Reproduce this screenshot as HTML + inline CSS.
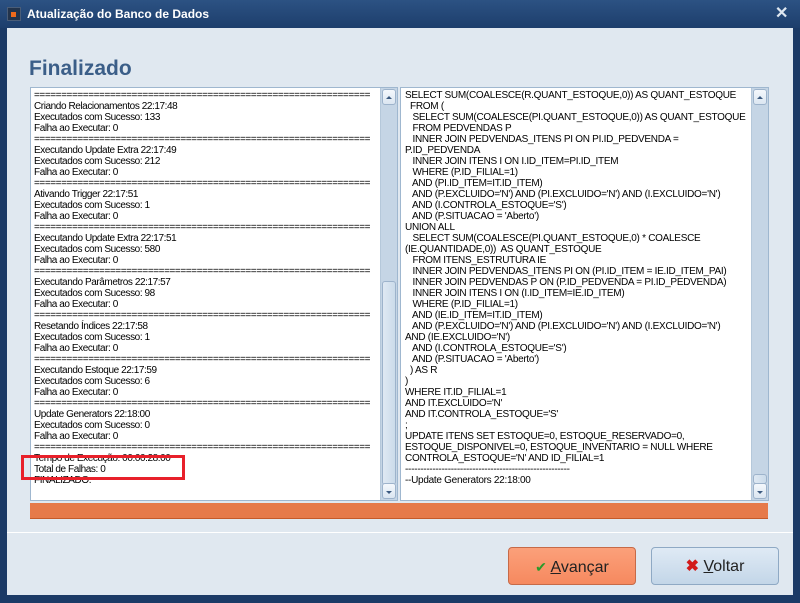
<!DOCTYPE html>
<html><head><meta charset="utf-8"><style>
*{margin:0;padding:0;box-sizing:border-box}
body{width:800px;height:603px;overflow:hidden;background:#1b3a66;font-family:"Liberation Sans",sans-serif;position:relative}
.tb{position:absolute;left:0;top:0;width:800px;height:28px;background:linear-gradient(#2c5283,#1d3e6c)}
.tb .t{position:absolute;left:27px;top:7px;color:#fff;font-weight:bold;font-size:12px}
.ico{position:absolute;left:7px;top:7px;width:14px;height:14px;background:#23344c;border:1px solid #4a5d78}
.ico:after{content:"";position:absolute;left:3px;top:4px;width:5px;height:5px;background:#f06a1c}
.x{position:absolute;left:775px;top:3px;color:#dfe7f0;font-size:16px;font-weight:bold}
.client{position:absolute;left:7px;top:28px;width:786px;height:567px;background:#e0e8f0}
.fin{position:absolute;left:29px;top:57px;font-size:21px;font-weight:bold;color:#3b5e88}
.panel{position:absolute;top:87px;height:414px;background:#fff;border:1px solid #9fb7cf;overflow:hidden}
.txt{position:absolute;left:3px;top:2px;font-size:10px;line-height:11px;white-space:pre;color:#000}
.sb{position:absolute;top:0;right:0;width:17px;height:100%;background:#c5d5e5;border-left:1px solid #b5c8da}
.btnA,.btnB{position:absolute;left:1px;width:14px;height:16px;border:1px solid #9db3cb;border-radius:3px;background:linear-gradient(#f4f8fc,#dbe6f1)}
.btnA{top:1px}.btnB{bottom:1px}
.btnA:after,.btnB:after{content:"";position:absolute;left:3px;border-left:3px solid transparent;border-right:3px solid transparent}
.btnA:after{top:6px;border-bottom:3px solid #3c5a80}
.btnB:after{top:7px;border-top:3px solid #3c5a80}
.thumb{position:absolute;left:1px;width:14px;border:1px solid #9db3cb;border-radius:3px;background:linear-gradient(90deg,#dfe9f3,#cbdbea)}
.bar{position:absolute;left:30px;top:503px;width:738px;height:16px;background:#e67a4a;border-bottom:1px solid #c45a2a}
.sep{position:absolute;left:7px;top:532px;width:786px;height:1px;background:#fff}
.b{position:absolute;top:547px;width:128px;height:38px;border-radius:4px;font-size:16px;text-align:center;line-height:38px;color:#222}
.b1{left:508px;background:linear-gradient(#fba07a,#f6895f);border:1px solid #c66a48}
.b2{left:651px;background:linear-gradient(#dfeaf5,#c3d6e8);border:1px solid #8fa9c4}
.red{position:absolute;left:21px;top:455px;width:164px;height:25px;border:3px solid #e8202a}
</style></head><body>
<div class="tb"><div class="ico"></div><div class="t">Atualização do Banco de Dados</div><div class="x">✕</div></div>
<div class="client"></div>
<div class="fin">Finalizado</div>
<div class="panel" style="left:30px;width:368px">
<div class="txt" style="letter-spacing:-0.42px">==============================================================
Criando Relacionamentos 22:17:48
Executados com Sucesso: 133
Falha ao Executar: 0
==============================================================
Executando Update Extra 22:17:49
Executados com Sucesso: 212
Falha ao Executar: 0
==============================================================
Ativando Trigger 22:17:51
Executados com Sucesso: 1
Falha ao Executar: 0
==============================================================
Executando Update Extra 22:17:51
Executados com Sucesso: 580
Falha ao Executar: 0
==============================================================
Executando Parâmetros 22:17:57
Executados com Sucesso: 98
Falha ao Executar: 0
==============================================================
Resetando Índices 22:17:58
Executados com Sucesso: 1
Falha ao Executar: 0
==============================================================
Executando Estoque 22:17:59
Executados com Sucesso: 6
Falha ao Executar: 0
==============================================================
Update Generators 22:18:00
Executados com Sucesso: 0
Falha ao Executar: 0
==============================================================
Tempo de Execução: 00:00:28:00
Total de Falhas: 0
FINALIZADO.</div>
<div class="sb"><div class="btnA"></div><div class="thumb" style="top:193px;height:204px"></div><div class="btnB"></div></div>
</div>
<div class="panel" style="left:400px;width:369px">
<div class="txt" style="letter-spacing:-0.28px;left:4px">SELECT SUM(COALESCE(R.QUANT_ESTOQUE,0)) AS QUANT_ESTOQUE
  FROM (
   SELECT SUM(COALESCE(PI.QUANT_ESTOQUE,0)) AS QUANT_ESTOQUE
   FROM PEDVENDAS P
   INNER JOIN PEDVENDAS_ITENS PI ON PI.ID_PEDVENDA =
P.ID_PEDVENDA
   INNER JOIN ITENS I ON I.ID_ITEM=PI.ID_ITEM
   WHERE (P.ID_FILIAL=1)
   AND (PI.ID_ITEM=IT.ID_ITEM)
   AND (P.EXCLUIDO='N') AND (PI.EXCLUIDO='N') AND (I.EXCLUIDO='N')
   AND (I.CONTROLA_ESTOQUE='S')
   AND (P.SITUACAO = 'Aberto')
UNION ALL
   SELECT SUM(COALESCE(PI.QUANT_ESTOQUE,0) * COALESCE
(IE.QUANTIDADE,0))  AS QUANT_ESTOQUE
   FROM ITENS_ESTRUTURA IE
   INNER JOIN PEDVENDAS_ITENS PI ON (PI.ID_ITEM = IE.ID_ITEM_PAI)
   INNER JOIN PEDVENDAS P ON (P.ID_PEDVENDA = PI.ID_PEDVENDA)
   INNER JOIN ITENS I ON (I.ID_ITEM=IE.ID_ITEM)
   WHERE (P.ID_FILIAL=1)
   AND (IE.ID_ITEM=IT.ID_ITEM)
   AND (P.EXCLUIDO='N') AND (PI.EXCLUIDO='N') AND (I.EXCLUIDO='N')
AND (IE.EXCLUIDO='N')
   AND (I.CONTROLA_ESTOQUE='S')
   AND (P.SITUACAO = 'Aberto')
  ) AS R
)
WHERE IT.ID_FILIAL=1
AND IT.EXCLUIDO='N'
AND IT.CONTROLA_ESTOQUE='S'
;
UPDATE ITENS SET ESTOQUE=0, ESTOQUE_RESERVADO=0,
ESTOQUE_DISPONIVEL=0, ESTOQUE_INVENTARIO = NULL WHERE
CONTROLA_ESTOQUE='N' AND ID_FILIAL=1
------------------------------------------------------
--Update Generators 22:18:00</div>
<div class="sb"><div class="btnA"></div><div class="thumb" style="top:386px;height:10px"></div><div class="btnB"></div></div>
</div>
<div class="red"></div>
<div class="bar"></div>
<div class="sep"></div>
<div class="b b1"><span style="color:#2a9a2a;font-size:14px">✔</span> <u>A</u>vançar</div>
<div class="b b2"><span style="color:#d21a1a;font-weight:bold">✖</span> <u>V</u>oltar</div>
</body></html>
